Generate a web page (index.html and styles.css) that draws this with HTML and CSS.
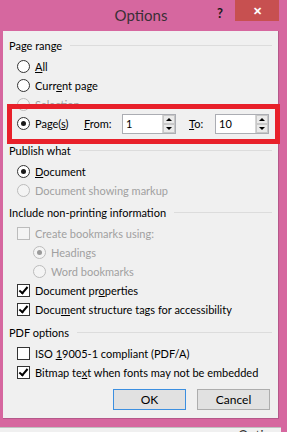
FILE: index.html
```html
<!DOCTYPE html>
<html>
<head lang="en">
    <meta charset="UTF-8">
    <title>Options</title>
    <link rel="stylesheet" href="styles.css">
</head>
<body>

<div class="title-bar">
    <span class="title">Options</span>
    <span class="help">?</span>
    <span class="close">&#x2715;</span>
</div>

<div class="client">
    <div class="header"><span>Page range</span><i></i></div>
    <div class="row"><span class="radio"></span><span><u>A</u>ll</span></div>
    <div class="row"><span class="radio"></span><span>Curr<u>e</u>nt page</span></div>
    <div class="row off"><span class="radio"></span><span>Selection</span></div>
    <div class="row">
        <span class="radio on"></span><span class="pages">Page(<u>s</u>)</span>
        <span class="from"><u>F</u>rom:</span>
        <span class="spin"><span class="value">1</span><span class="arrows"><b class="up"></b><b class="down"></b></span></span>
        <span class="to"><u>T</u>o:</span>
        <span class="spin"><span class="value">10</span><span class="arrows"><b class="up"></b><b class="down"></b></span></span>
    </div>
    <div class="mark"></div>

    <div class="header publish"><span>Publish what</span><i></i></div>
    <div class="row"><span class="radio on"></span><span><u>D</u>ocument</span></div>
    <div class="row off"><span class="radio"></span><span>Document showing markup</span></div>

    <div class="header include"><span>Include non-printing information</span><i></i></div>
    <div class="row off"><span class="check"></span><span>Create bookmarks using:</span></div>
    <div class="row off sub"><span class="radio on"></span><span>Headings</span></div>
    <div class="row off sub"><span class="radio"></span><span>Word bookmarks</span></div>
    <div class="row"><span class="check on"></span><span>Document pr<u>o</u>perties</span></div>
    <div class="row"><span class="check on"></span><span>Docu<u>m</u>ent structure tags for accessibility</span></div>

    <div class="header pdf"><span>PDF options</span><i></i></div>
    <div class="row"><span class="check"></span><span>ISO <u>1</u>9005-1 compliant (PDF/A)</span></div>
    <div class="row"><span class="check on"></span><span>Bitmap te<u>x</u>t when fonts may not be embedded</span></div>

    <div class="buttons">
        <span class="button default">OK</span>
        <span class="button">Cancel</span>
    </div>
</div>

<div class="under"><span>Options</span></div>

</body>
</html>
```

FILE: styles.css
```css
html, body, div, span {
    padding: 0px;
    margin: 0px;
}

body {
    width: 287px;
    height: 432px;
    overflow: hidden;
    background: #d6679f;
    font-family: Lato, "Noto Sans", sans-serif;
    font-size: 11px;
    color: #000000;
}

u {
    text-decoration: underline;
    text-underline-offset: 1px;
}

/* title bar */
.title-bar {
    height: 31px;
    position: relative;
}

.title {
    display: block;
    text-align: center;
    width: 282px;
    line-height: 30px;
    font-size: 15px;
    color: #3a2f36;
}

.help {
    position: absolute;
    left: 217px;
    top: 5px;
    font-size: 13px;
    font-weight: bold;
    color: #1a1a1a;
}

.close {
    position: absolute;
    left: 235px;
    top: 0px;
    width: 44px;
    height: 21px;
    line-height: 21px;
    text-align: center;
    background: #c75050;
    color: #ffffff;
    font-size: 11px;
    font-weight: bold;
}

/* client area */
.client {
    position: relative;
    margin: 0px 8px 0px 3px;
    height: 388px;
    box-sizing: border-box;
    padding-top: 5px;
    background: #f0f0f0;
    border-right: 1px solid #b5588a;
    border-bottom: 1px solid #b5588a;
}

.header {
    display: flex;
    align-items: center;
    height: 19px;
    padding: 0px 6px 0px 6px;
    margin-bottom: 2px;
}

.header i {
    flex: 1;
    height: 1px;
    margin-left: 8px;
    background: #dcdcdc;
}

.publish {
    margin-top: 8px;
}

.include {
    margin-top: 3px;
}

.pdf {
    margin-top: 4px;
}

.row {
    display: flex;
    align-items: center;
    height: 19px;
    padding-left: 14px;
    white-space: nowrap;
}

.row.sub {
    padding-left: 30px;
}

.row.off {
    color: #a0a0a0;
}

.radio, .check {
    box-sizing: border-box;
    width: 13px;
    height: 13px;
    margin-right: 5px;
    border: 1px solid #333333;
    background: #ffffff;
    position: relative;
    flex: none;
}

.radio {
    border-radius: 50%;
}

.radio.on::after {
    content: "";
    position: absolute;
    left: 3px;
    top: 3px;
    width: 5px;
    height: 5px;
    border-radius: 50%;
    background: #1a1a1a;
}

.check.on::after {
    content: "";
    position: absolute;
    left: 3px;
    top: 0px;
    width: 3px;
    height: 7px;
    border: solid #000000;
    border-width: 0px 2px 2px 0px;
    transform: rotate(40deg);
}

.off .radio, .off .check {
    border-color: #bcbcbc;
    background: #f4f4f4;
}

.off .radio.on::after {
    background: #9a9a9a;
}

/* page range inputs */
.pages {
    width: 49px;
}

.from {
    width: 38px;
}

.to {
    margin-left: 13px;
    width: 26px;
}

.spin {
    display: flex;
    box-sizing: border-box;
    width: 54px;
    height: 20px;
    border: 1px solid #abadb3;
    background: #ffffff;
}

.value {
    flex: 1;
    padding-left: 3px;
    line-height: 18px;
}

.arrows {
    display: flex;
    flex-direction: column;
    width: 12px;
    border-left: 1px solid #d5d5d5;
}

.arrows b {
    flex: 1;
    display: flex;
    align-items: center;
    justify-content: center;
    background: #eaeaea;
    border: 1px solid #c8c8c8;
}

.arrows b::after {
    content: "";
    border-left: 3px solid transparent;
    border-right: 3px solid transparent;
}

.arrows .up::after {
    border-bottom: 3px solid #000000;
}

.arrows .down::after {
    border-top: 3px solid #000000;
}

/* red annotation box */
.mark {
    position: absolute;
    left: 4px;
    top: 73px;
    width: 273px;
    height: 40px;
    box-sizing: border-box;
    border: 5px solid #e8202a;
}

/* buttons */
.buttons {
    display: flex;
    justify-content: flex-end;
    gap: 11px;
    margin-top: 7px;
    padding-right: 8px;
}

.button {
    box-sizing: border-box;
    width: 73px;
    height: 21px;
    line-height: 19px;
    text-align: center;
    font-size: 12px;
    border: 1px solid #adadad;
    background: #e1e1e1;
}

.button.default {
    border-color: #3c8fe0;
}

/* window underneath */
.under {
    margin-top: 8px;
    width: 281px;
    height: 5px;
    overflow: hidden;
    background: #f0f0f0;
    border-top: 1px solid #c0c0c0;
    box-sizing: border-box;
    position: relative;
}

.under span {
    position: absolute;
    left: 238px;
    top: 1px;
    font-size: 13px;
    line-height: 13px;
    color: #333333;
}
```
